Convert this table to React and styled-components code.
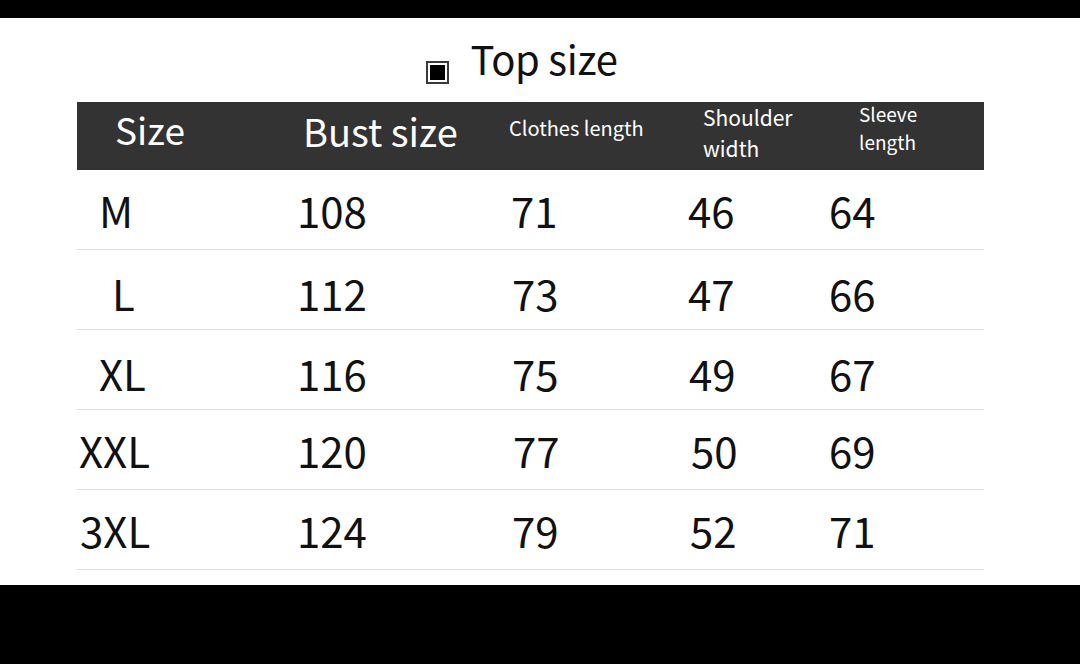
import React from "react";
import styled, { createGlobalStyle } from "styled-components";

const GlobalStyle = createGlobalStyle`
    html, body {
        margin: 0;
        padding: 0;
        background: #000;
    }
    body {
        font-family: "Noto Sans CJK SC", "Noto Sans", sans-serif;
    }
`;

const Page = styled.div`
    width: 1080px;
    height: 664px;
    display: flex;
    flex-direction: column;
    background: #000;
    overflow: hidden;
`;

const Sheet = styled.div`
    margin-top: 18px;
    height: 567px;
    background: #fff;
    display: flex;
    flex-direction: column;
`;

const TitleRow = styled.div`
    height: 84px;
    display: flex;
    align-items: flex-start;
    justify-content: center;
    padding-right: 36px;
`;

const Bullet = styled.span`
    width: 23px;
    height: 23px;
    box-sizing: border-box;
    border: 2px solid #3a3a3a;
    padding: 2px;
    margin-top: 43px;
    margin-right: 21px;
    display: flex;

    &::after {
        content: "";
        flex: 1;
        background: #000;
    }
`;

const Title = styled.h1`
    margin: 11px 0 0;
    font-size: 40px;
    font-weight: 400;
    color: #111;
    letter-spacing: -0.3px;
`;

const Table = styled.div`
    margin-left: 77px;
    width: 907px;
    display: grid;
    grid-template-columns: 220px 212px 179px 141px 155px;
`;

const HeadCell = styled.div`
    height: 68px;
    background: #333;
    color: #fff;
    display: flex;
    flex-direction: column;
    justify-content: center;
    padding-left: ${p => p.$shift}px;
    padding-bottom: ${p => p.$lift || 0}px;
    font-size: ${p => p.$size}px;
    line-height: ${p => p.$lh || 1.2};
    box-sizing: border-box;
`;

const Cell = styled.div`
    height: 80px;
    border-bottom: 1.5px solid #e0e0e0;
    display: flex;
    align-items: center;
    padding-left: ${p => p.$shift}px;
    padding-top: ${p => p.$drop || 0}px;
    font-size: 42px;
    color: #111;
    box-sizing: border-box;
`;

const headers = [
    { label: ["Size"], size: 37, shift: 38, lift: 14 },
    { label: ["Bust size"], size: 38, shift: 6, lift: 10 },
    { label: ["Clothes length"], size: 20, shift: 0, lift: 17 },
    { label: ["Shoulder", "width"], size: 21, shift: 15, lift: 6, lh: 1.5 },
    { label: ["Sleeve", "length"], size: 19, shift: 30, lift: 16, lh: 1.45 },
];

const rows = [
    { drop: 0, cells: [["M", 22], ["108", 0], ["71", 2], ["46", -1], ["64", -1]] },
    { drop: 6, cells: [["L", 35], ["112", 0], ["73", 3], ["47", -2], ["66", 0]] },
    { drop: 6, cells: [["XL", 22], ["116", 0], ["75", 3], ["49", 1], ["67", 0]] },
    { drop: 0, cells: [["XXL", 2], ["120", 0], ["77", 4], ["50", 3], ["69", 0]] },
    { drop: 0, cells: [["3XL", 3], ["124", 0], ["79", 3], ["52", 2], ["71", -2]] },
];

export default function App() {
    return <>
        <GlobalStyle/>
        <Page>
            <Sheet>
                <TitleRow>
                    <Bullet/>
                    <Title>Top size</Title>
                </TitleRow>
                <Table>
                    {headers.map((h, i) =>
                        <HeadCell key={i} $size={h.size} $shift={h.shift} $lift={h.lift} $lh={h.lh}>
                            {h.label.map(line => <span key={line}>{line}</span>)}
                        </HeadCell>
                    )}
                    {rows.map((r, ri) => r.cells.map(([text, shift], ci) =>
                        <Cell key={`${ri}-${ci}`} $shift={shift} $drop={r.drop}>{text}</Cell>
                    ))}
                </Table>
            </Sheet>
        </Page>
    </>;
}
